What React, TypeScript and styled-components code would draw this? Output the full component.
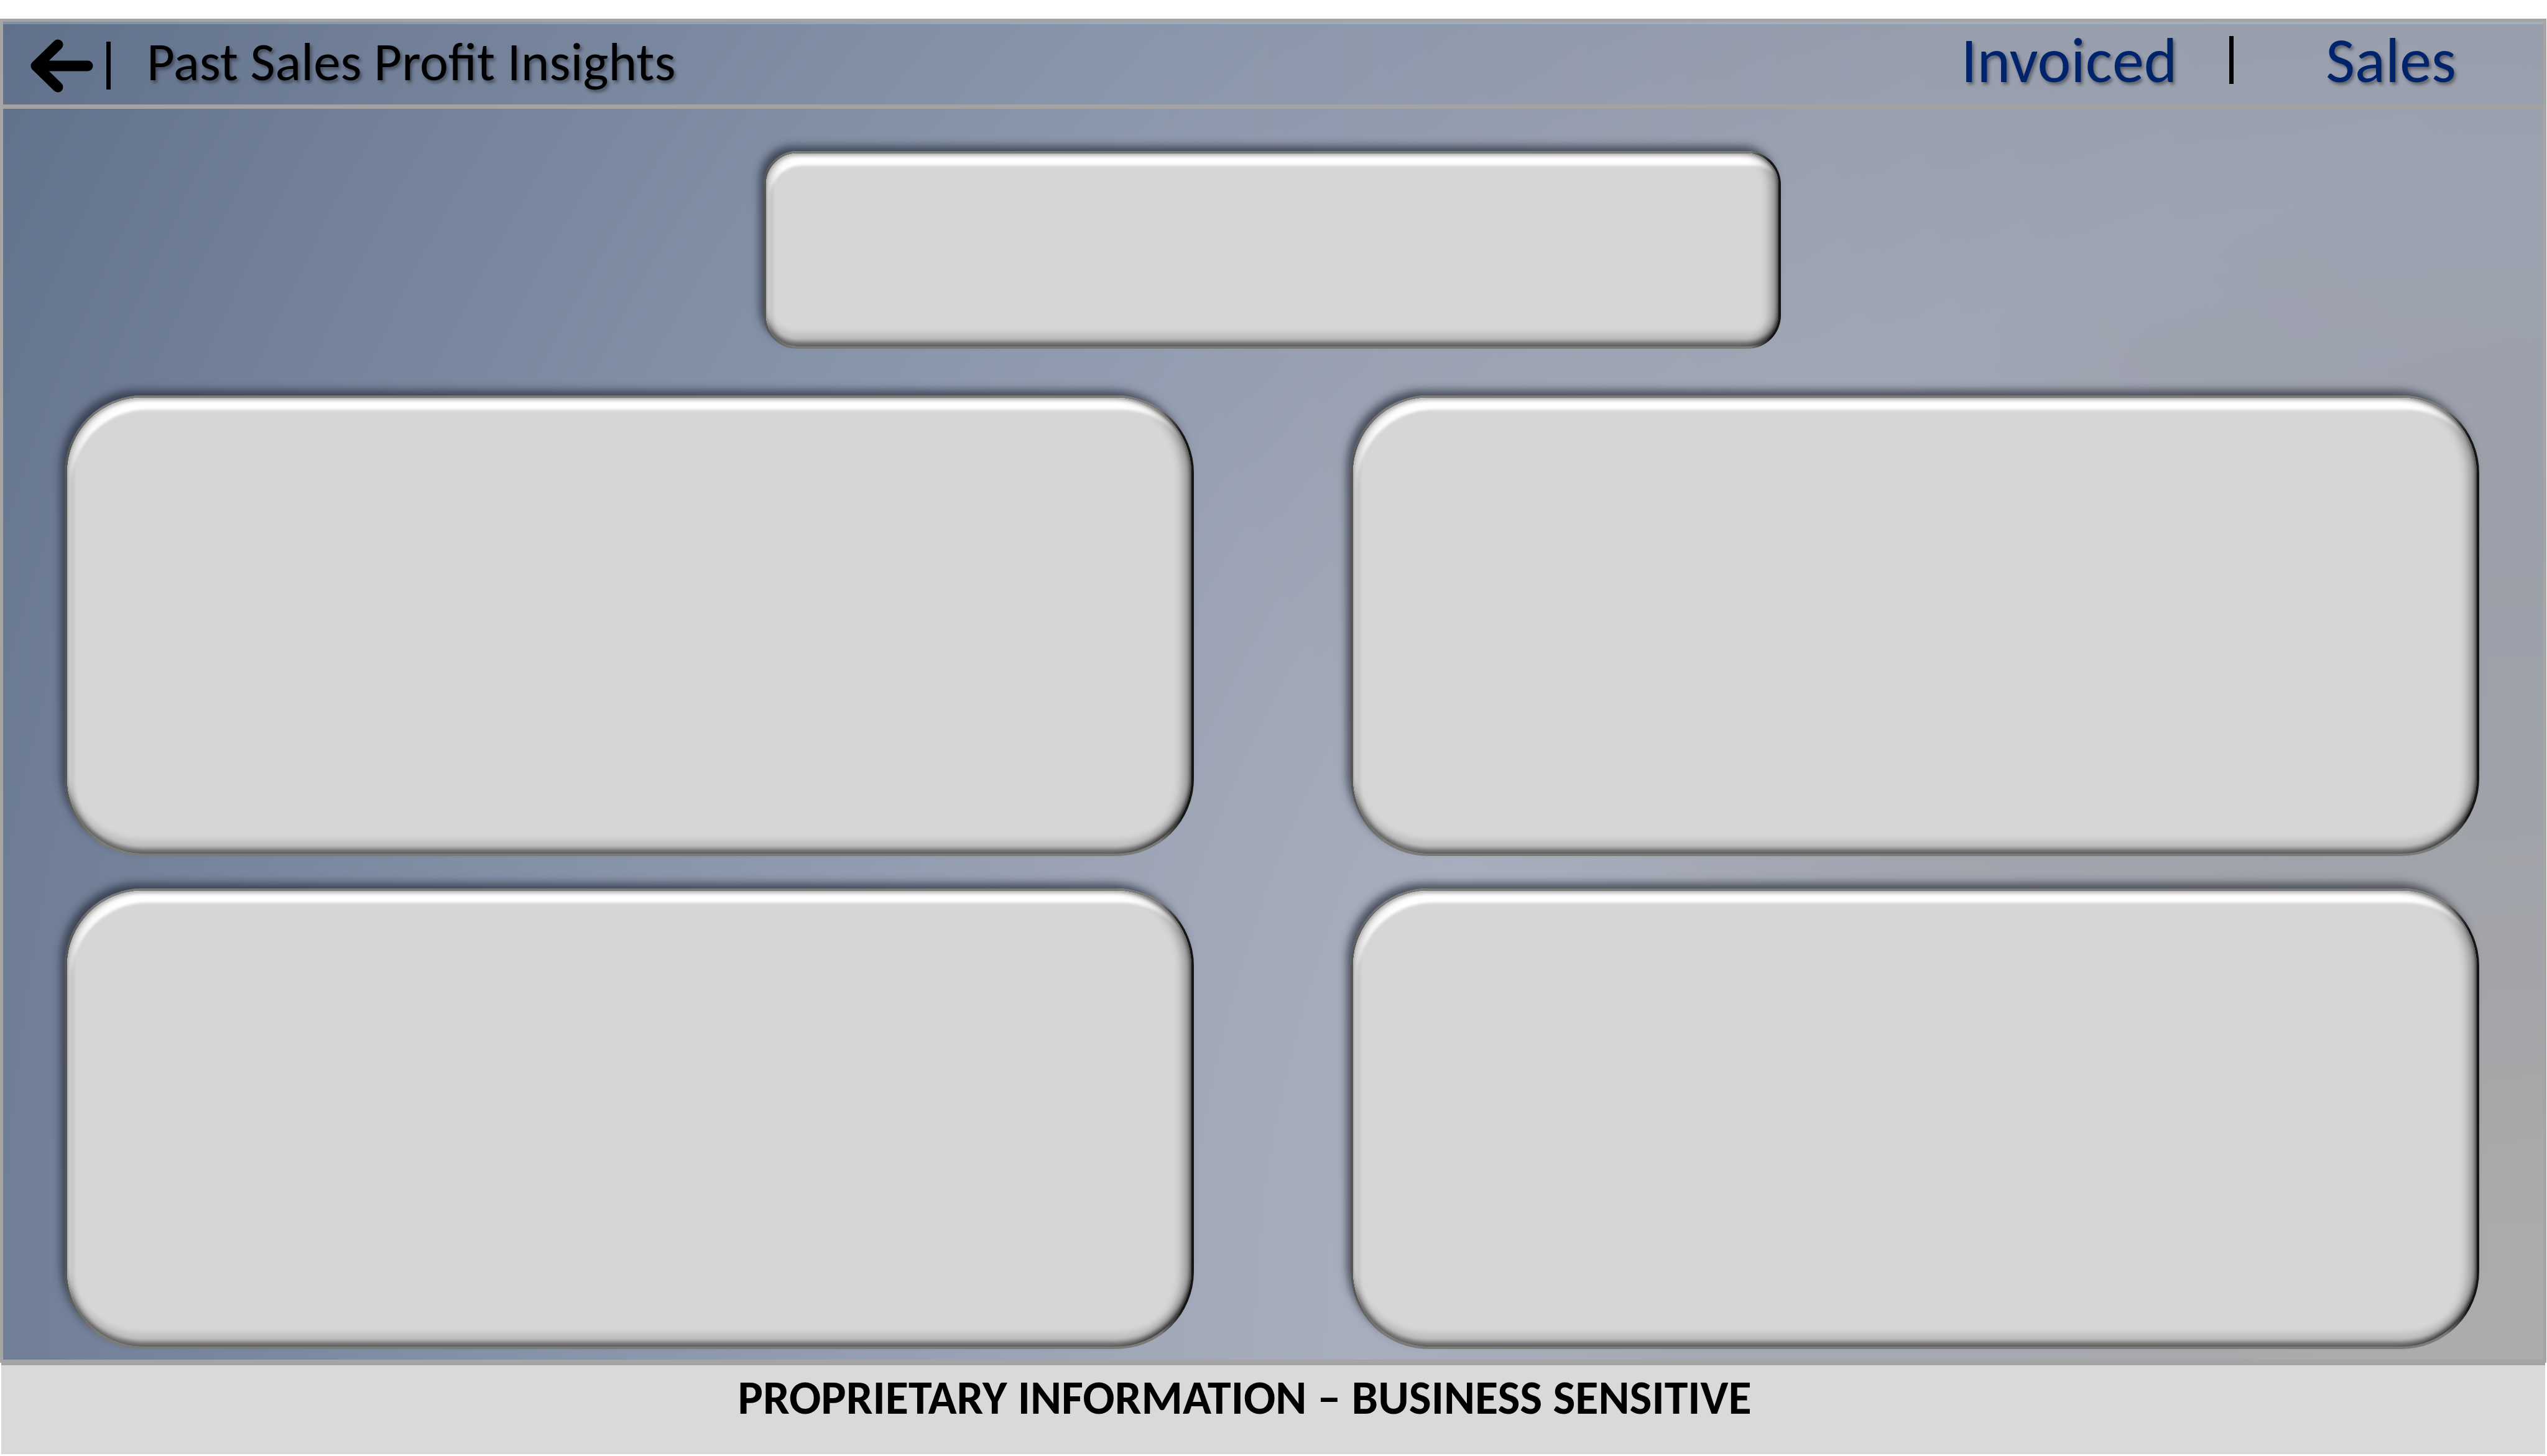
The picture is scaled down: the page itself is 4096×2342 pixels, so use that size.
import React from "react";
import styled, { createGlobalStyle } from "styled-components";

const GlobalStyle = createGlobalStyle`
  *, *::before, *::after { box-sizing: border-box; }
  body { margin: 0; background: #fff; font-family: Carlito, Calibri, Lato, sans-serif; color: #000; }
`;

const Page = styled.div`
  min-height: 100vh;
  display: flex;
  flex-direction: column;
  padding: 30px 0 3px;
`;

const Slide = styled.div`
  flex: 1;
  display: flex;
  flex-direction: column;
  margin-right: 1px;
  border: 5px solid #a5a5a5;
  background:
    radial-gradient(circle at 100% 0, rgba(0, 0, 0, 0.07) 0, rgba(0, 0, 0, 0.06) 800px, transparent 2300px),
    radial-gradient(
      circle at 100% 100%,
      #adaeac 0,
      #adadac 250px,
      #a9aaae 560px,
      #a6a9b2 930px,
      #a5a9b4 1300px,
      #a8aebd 1900px,
      #a0a7b7 2300px,
      #929cb0 2800px,
      #8190a5 3400px,
      #707e97 4090px,
      #60708a 4640px
    );
`;

const Header = styled.header`
  display: flex;
  align-items: center;
  height: 140px;
  padding: 0 140px 0 42px;
  border-top: 4px solid rgba(190, 215, 235, 0.3);
  border-bottom: 7px solid #a3a3a3;
`;

const BackGroup = styled.div`
  display: flex;
  align-items: center;
  gap: 20px;
  padding-top: 4px;
`;

const BackButton = styled.button`
  display: flex;
  padding: 0;
  border: 0;
  background: none;
  cursor: pointer;
`;

const Divider = styled.span`
  width: 7px;
  height: 77px;
  background: #000;
`;

const Title = styled.h1`
  flex: 1;
  margin: 0 0 0 58px;
  padding-bottom: 10px;
  font-size: 87px;
  line-height: 104px;
  font-weight: 400;
  text-shadow: 3px 4px 5px rgba(0, 0, 0, 0.4);
`;

const Nav = styled.nav`
  display: flex;
  align-items: center;
  padding-bottom: 14px;
`;

const NavLink = styled.a`
  color: #00246b;
  font-size: 102px;
  line-height: 104px;
  text-decoration: none;
  text-shadow: 3px 4px 5px rgba(0, 0, 0, 0.4);
  &:first-child { margin-right: 84px; }
  &:last-child { margin-left: 148px; }
`;

const Main = styled.main`
  flex: 1;
  display: flex;
  flex-direction: column;
  gap: 75px;
  padding: 68px 103px 17px 99px;
`;

const Grid = styled.div`
  flex: 1;
  display: grid;
  grid-template-columns: 1fr 1fr;
  grid-template-rows: 1fr 1fr;
  gap: 52px 252px;
`;

const Card = styled.section<{ $radius: number }>`
  display: flex;
  padding: 4px;
  border-radius: ${(p) => p.$radius}px;
  background: linear-gradient(to right, #555 0, #7a7a78 3%, #7a7a78 97%, #151515 99%);
  box-shadow: -8px -10px 14px -2px rgba(36, 40, 52, 0.7);
`;

const Face = styled.div<{ $radius: number }>`
  flex: 1;
  border-radius: ${(p) => p.$radius - 4}px;
  background: #d6d6d6;
  box-shadow:
    inset -5px 0 6px -3px rgba(0, 0, 0, 0.6),
    inset -22px 0 16px -9px rgba(0, 0, 0, 0.32),
    inset 0 -11px 6px -3px rgba(0, 0, 0, 0.42),
    inset 0 -26px 8px -4px rgba(0, 0, 0, 0.1),
    inset 16px 0 16px -10px rgba(0, 0, 0, 0.3),
    inset 0 7px 4px -2px #d9d9d9,
    inset 8px 21px 4px -2px #fff,
    inset 20px 0 4px -2px #dedede;
`;

const Summary = styled.div`
  display: grid;
  width: 100%;
  max-width: 1636px;
  height: 318px;
  margin: 0 auto;
`;

const Footer = styled.footer`
  height: 147px;
  margin: 0 3px 0 2px;
  padding-right: 92px;
  border-top: 4px solid #a3a3a3;
  background: #d9d9d9;
  text-align: center;
  font-size: 76px;
  line-height: 104px;
  font-weight: 700;
`;

const Panel = ({ radius, label }: { radius: number; label: string }) => (
  <Card $radius={radius} aria-label={label}>
    <Face $radius={radius} />
  </Card>
);

export default function App() {
  return (
    <Page>
      <GlobalStyle />
      <Slide>
        <Header>
          <BackGroup>
            <BackButton type="button" aria-label="Back">
              <svg width="104" height="88" viewBox="0 0 104 88" fill="none" stroke="#000" strokeWidth="17" strokeLinecap="round" strokeLinejoin="round">
                <path d="M46 10 L11 44 L46 78 M14 44 H94" />
              </svg>
            </BackButton>
            <Divider />
          </BackGroup>
          <Title>Past Sales Profit Insights</Title>
          <Nav>
            <NavLink href="#invoiced">Invoiced</NavLink>
            <Divider />
            <NavLink href="#sales">Sales</NavLink>
          </Nav>
        </Header>
        <Main>
          <Summary>
            <Panel radius={54} label="Summary" />
          </Summary>
          <Grid>
            <Panel radius={125} label="Top left" />
            <Panel radius={125} label="Top right" />
            <Panel radius={125} label="Bottom left" />
            <Panel radius={125} label="Bottom right" />
          </Grid>
        </Main>
      </Slide>
      <Footer>PROPRIETARY INFORMATION – BUSINESS SENSITIVE</Footer>
    </Page>
  );
}
